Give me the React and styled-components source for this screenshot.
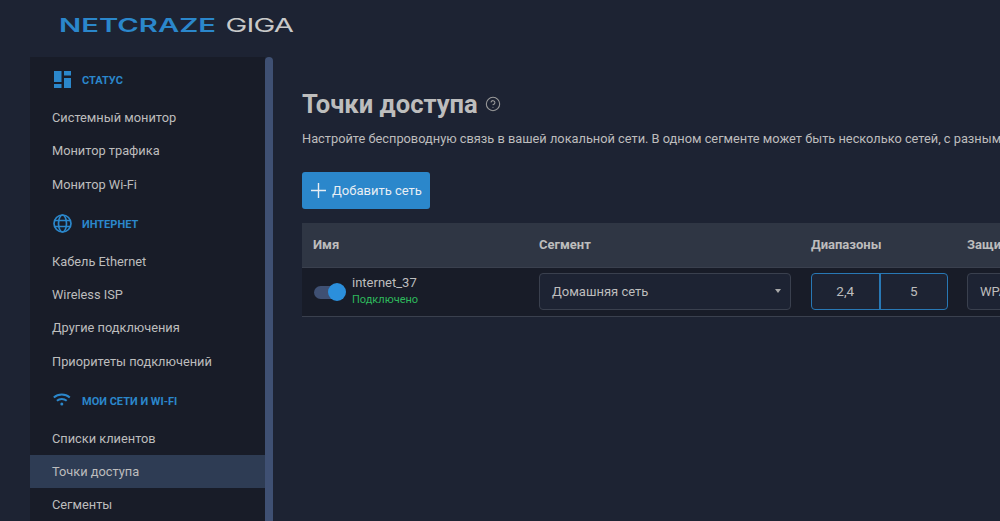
import React from 'react'
import styled, { createGlobalStyle } from 'styled-components'
import { CircleHelp } from 'lucide-react'

const colors = {
  page: '#1d2333',
  panel: '#181c28',
  head: '#2f3644',
  active: '#2e3c54',
  thumb: '#3f5073',
  blue: '#2b87cb',
  text: '#bdbdbd',
  line: '#3a404e',
}

const GlobalStyle = createGlobalStyle`
  html, body {
    margin: 0;
    height: 100%;
    overflow: hidden;
    background: ${colors.page};
    color: ${colors.text};
    font-family: Roboto, "Liberation Sans", sans-serif;
  }
`

const Shell = styled.div`
  display: flex;
  flex-direction: column;
  height: 100vh;
  overflow: hidden;
`

const Header = styled.header`
  flex: none;
  height: 57px;
  padding-left: 59px;
  padding-bottom: 6px;
  display: flex;
  align-items: center;
  box-sizing: border-box;
`

const Logo = styled.div`
  display: flex;
  align-items: baseline;
  gap: 6px;
  font-family: Inter, sans-serif;
  font-size: 18.5px;
  line-height: 1;
  white-space: nowrap;
  transform: scaleX(1.58);
  transform-origin: left center;
`

const LogoMark = styled.span`
  color: ${colors.blue};
  font-weight: 600;
`

const LogoModel = styled.span`
  color: #c9c9c9;
  font-weight: 400;
  letter-spacing: -0.5px;
`

const Body = styled.div`
  flex: 1;
  min-height: 0;
  display: flex;
  padding-left: 30px;
`

const Sidebar = styled.nav`
  flex: none;
  width: 235px;
  background: ${colors.panel};
  overflow: hidden;
`

const Scrollbar = styled.div`
  flex: none;
  width: 8px;
  background: ${colors.thumb};
  border-radius: 4px 4px 0 0;
`

const SectionTitle = styled.div`
  height: 43.78px;
  box-sizing: border-box;
  padding: 3px 0 0 23px;
  display: flex;
  align-items: center;
  gap: 10px;
  color: ${colors.blue};
  font-size: 11px;
  font-weight: 700;
  text-transform: uppercase;
`

const SectionIcon = styled.svg`
  width: 19px;
  height: 19px;
  flex: none;
  margin-top: -2px;
`

const NavItem = styled.a`
  display: flex;
  align-items: center;
  height: 33.33px;
  padding-left: 22px;
  font-size: 12.8px;
  color: ${colors.text};
  background: ${({ $active }) => ($active ? colors.active : 'transparent')};
`

const Main = styled.main`
  flex: 1;
  min-width: 0;
  padding: 0 0 0 29px;
  overflow: hidden;
`

const TitleRow = styled.div`
  display: flex;
  align-items: center;
  gap: 7px;
  margin-top: 32px;
  height: 30px;
  color: #9a9a9a;
`

const Title = styled.h1`
  margin: 0;
  font-size: 25.6px;
  font-weight: 700;
  color: ${colors.text};
`

const Description = styled.p`
  margin: 11px 0 0;
  font-size: 12.8px;
  line-height: 18px;
  white-space: nowrap;
`

const AddButton = styled.button`
  display: flex;
  align-items: center;
  gap: 5px;
  width: 128px;
  height: 37px;
  margin-top: 24px;
  padding: 0 0 0 8px;
  border: 0;
  border-radius: 3px;
  background: ${colors.blue};
  color: #e8eef4;
  font-family: inherit;
  font-size: 13px;
`

const Table = styled.div`
  width: 800px;
  margin-top: 14px;
  display: grid;
  grid-template-columns: 226px 272px 156px 146px;
`

const HeadCell = styled.div`
  height: 44px;
  box-sizing: content-box;
  padding-left: 11px;
  padding-bottom: 0;
  display: flex;
  align-items: center;
  background: ${colors.head};
  border-bottom: 1px solid ${colors.line};
  font-size: 13px;
  font-weight: 700;
  line-height: 42px;
`

const Cell = styled.div`
  height: 49px;
  box-sizing: border-box;
  background: ${colors.panel};
  border-bottom: 1px solid ${colors.line};
  padding: 0 0 2px ${({ $pad }) => $pad}px;
  display: flex;
  align-items: center;
`

const Toggle = styled.div`
  position: relative;
  width: 28px;
  height: 13px;
  margin-top: 2px;
  border-radius: 7px;
  background: ${colors.thumb};
`

const ToggleKnob = styled.span`
  position: absolute;
  top: -3px;
  right: -4px;
  width: 18px;
  height: 18px;
  border-radius: 50%;
  background: #2b8fdc;
`

const NetName = styled.div`
  margin-left: 10px;
  display: flex;
  flex-direction: column;
  gap: 2px;
  font-size: 13px;
  line-height: 16px;
`

const NetStatus = styled.span`
  font-size: 11px;
  line-height: 14px;
  color: #2eb85c;
`

const Select = styled.div`
  width: ${({ $width }) => $width}px;
  height: 37px;
  box-sizing: border-box;
  flex: none;
  padding: 0 9px 0 12px;
  display: flex;
  align-items: center;
  justify-content: space-between;
  background: ${colors.page};
  border: 1px solid ${colors.line};
  border-radius: 4px;
  font-size: 13px;
  white-space: nowrap;
`

const Caret = styled.span`
  width: 0;
  height: 0;
  border: 3px solid transparent;
  border-top: 4px solid #a9a9a9;
  border-bottom: 0;
`

const Bands = styled.div`
  width: 137px;
  height: 37px;
  box-sizing: border-box;
  display: flex;
  border: 1px solid #2878b5;
  border-radius: 4px;
  background: ${colors.page};
`

const Band = styled.div`
  flex: 1;
  display: flex;
  align-items: center;
  justify-content: center;
  font-size: 13.5px;
  & + & {
    border-left: 2px solid #2878b5;
  }
`

const DashboardIcon = () => (
  <SectionIcon viewBox="0 0 19 19" fill={colors.blue}>
    <rect x="1" y="1" width="7.5" height="11" />
    <rect x="1" y="14" width="7.5" height="4" />
    <rect x="11" y="1" width="7" height="4.5" />
    <rect x="11" y="8" width="7" height="10" />
  </SectionIcon>
)

const GlobeIcon = () => (
  <SectionIcon viewBox="0 0 19 19" fill="none" stroke={colors.blue} strokeWidth="1.7">
    <circle cx="9.5" cy="9.5" r="8.5" />
    <ellipse cx="9.5" cy="9.5" rx="4" ry="8.5" />
    <path d="M1.6 6.5h15.8M1.6 12.5h15.8" />
  </SectionIcon>
)

const WifiIcon = () => (
  <SectionIcon viewBox="0.7 0 19 19" fill="none" stroke={colors.blue} strokeWidth="2">
    <path d="M1.5 6.5c4.5-4 11.5-4 16 0" />
    <path d="M4.6 9.8c2.8-2.4 7-2.4 9.8 0" />
    <circle cx="9.5" cy="13" r="1.5" fill={colors.blue} stroke="none" />
  </SectionIcon>
)

const PlusIcon = () => (
  <svg width="17" height="17" viewBox="0 0 17 17" stroke="#e8eef4" strokeWidth="1.4">
    <path d="M8.5 1v15M1 8.5h15" />
  </svg>
)

const sections = [
  { title: 'Статус', icon: DashboardIcon, items: ['Системный монитор', 'Монитор трафика', 'Монитор Wi-Fi'] },
  { title: 'Интернет', icon: GlobeIcon, items: ['Кабель Ethernet', 'Wireless ISP', 'Другие подключения', 'Приоритеты подключений'] },
  { title: 'Мои сети и Wi-Fi', icon: WifiIcon, items: ['Списки клиентов', 'Точки доступа', 'Сегменты'] },
]

export default function App() {
  return (
    <Shell>
      <GlobalStyle />
      <Header>
        <Logo>
          <LogoMark>NETCRAZE</LogoMark>
          <LogoModel>GIGA</LogoModel>
        </Logo>
      </Header>
      <Body>
        <Sidebar>
          {sections.map(({ title, icon: Icon, items }) => (
            <div key={title}>
              <SectionTitle>
                <Icon />
                {title}
              </SectionTitle>
              {items.map((item) => (
                <NavItem key={item} $active={item === 'Точки доступа'}>{item}</NavItem>
              ))}
            </div>
          ))}
        </Sidebar>
        <Scrollbar />
        <Main>
          <TitleRow>
            <Title>Точки доступа</Title>
            <CircleHelp size={16} strokeWidth={1.6} />
          </TitleRow>
          <Description>
            Настройте беспроводную связь в вашей локальной сети. В одном сегменте может быть несколько сетей, с разными настройками.
          </Description>
          <AddButton>
            <PlusIcon />
            Добавить сеть
          </AddButton>
          <Table>
            <HeadCell>Имя</HeadCell>
            <HeadCell>Сегмент</HeadCell>
            <HeadCell>Диапазоны</HeadCell>
            <HeadCell>Защита</HeadCell>
            <Cell $pad={12}>
              <Toggle><ToggleKnob /></Toggle>
              <NetName>
                internet_37
                <NetStatus>Подключено</NetStatus>
              </NetName>
            </Cell>
            <Cell $pad={11}>
              <Select $width={252}>
                Домашняя сеть
                <Caret />
              </Select>
            </Cell>
            <Cell $pad={11}>
              <Bands>
                <Band>2,4</Band>
                <Band>5</Band>
              </Bands>
            </Cell>
            <Cell $pad={11}>
              <Select $width={130}>WPA2-PSK</Select>
            </Cell>
          </Table>
        </Main>
      </Body>
    </Shell>
  )
}
